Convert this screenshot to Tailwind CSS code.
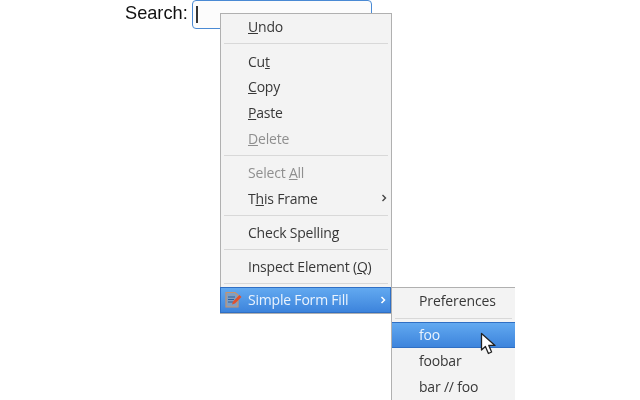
<!DOCTYPE html>
<html>
<head>
<meta charset="utf-8">
<script src="https://cdn.jsdelivr.net/npm/@tailwindcss/browser@4"></script>
</head>
<body class="bg-white overflow-hidden">
<div class="relative w-[640px] h-[400px] overflow-hidden bg-white blur-[0.35px]">
  <div class="flex items-start pl-[125px]">
    <span class="w-[66.5px] font-['Liberation_Sans',sans-serif] text-[18.2px] leading-[26px] text-[#111]">Search:</span>
    <div class="w-[180px] h-[29px] rounded-[4px] border-[1.5px] border-[#4a8ad4] bg-[#fcfcfc] flex items-center pl-[3.5px]">
      <div class="w-[1.5px] h-[17px] bg-[#333]"></div>
    </div>
  </div>

  <div class="absolute left-[220px] top-[13px] w-[172px] h-[301px] bg-[#f3f3f3] border border-[#b0b0b0] font-['Open_Sans',sans-serif] text-[14px] tracking-[-0.2px] text-[#383838] flex flex-col">
    <div class="h-[26px] flex items-center pl-[27px]"><span><u>U</u>ndo</span></div>
    <div class="h-[8px] flex items-center px-[3px]"><div class="h-px w-full bg-[#d8d8d8]"></div></div>
    <div class="h-[26px] flex items-center pl-[27px] pt-[1px]"><span>Cu<u>t</u></span></div>
    <div class="h-[26px] flex items-center pl-[27px]"><span><u>C</u>opy</span></div>
    <div class="h-[26px] flex items-center pl-[27px]"><span><u>P</u>aste</span></div>
    <div class="h-[26px] flex items-center pl-[27px] text-[#8f8f8f]"><span><u>D</u>elete</span></div>
    <div class="h-[8px] flex items-center px-[3px]"><div class="h-px w-full bg-[#d8d8d8]"></div></div>
    <div class="h-[26px] flex items-center pl-[27px] text-[#8f8f8f]"><span>Select <u>A</u>ll</span></div>
    <div class="h-[26px] flex items-center pl-[27px] justify-between pr-[4px]"><span>T<u>h</u>is Frame</span>
      <svg width="6" height="8" viewBox="0 0 6 8"><path d="M1.5 1 L4.5 4 L1.5 7" fill="none" stroke="#444" stroke-width="1.4"/></svg></div>
    <div class="h-[8px] flex items-center px-[3px]"><div class="h-px w-full bg-[#d8d8d8]"></div></div>
    <div class="h-[26px] flex items-center pl-[27px]"><span>Check Spellin<u>g</u></span></div>
    <div class="h-[8px] flex items-center px-[3px]"><div class="h-px w-full bg-[#d8d8d8]"></div></div>
    <div class="h-[26px] flex items-center pl-[27px]"><span>Inspect Element (<u>Q</u>)</span></div>
    <div class="h-[8px] flex items-center px-[3px]"><div class="h-px w-full bg-[#d8d8d8]"></div></div>
    <div class="h-[26px] flex items-center pl-[27px] pr-[4px] justify-between text-[#eaf3fd] bg-gradient-to-b from-[#62a9f0] to-[#3d84dc] border border-[#2f6fc4] -ml-px relative">
      <svg class="absolute left-[3px] top-[3px]" width="19" height="18" viewBox="0 0 19 18">
        <path d="M2 1.5 H11 L14 4 V16 H2 Z" fill="#7f9fc4" stroke="#c9936a" stroke-width="1.2"/>
        <path d="M4 6 H11 M4 8.5 H10 M4 11 H9" stroke="#2f5e9a" stroke-width="1"/>
        <path d="M8 13.5 L9 10.5 L15.5 4 L17.5 6 L11 12.5 Z" fill="#e2502c"/>
      </svg>
      <span>Simple Form Fill</span>
      <svg width="6" height="8" viewBox="0 0 6 8"><path d="M1.5 1 L4.5 4 L1.5 7" fill="none" stroke="#fff" stroke-width="1.5"/></svg>
    </div>
  </div>

  <div class="absolute left-[391px] top-[287px] w-[124px] h-[113px] bg-[#f3f3f3] border-l border-t border-[#b0b0b0] font-['Open_Sans',sans-serif] text-[14px] tracking-[-0.2px] text-[#383838] flex flex-col">
    <div class="h-[26px] flex items-center pl-[27px] pb-[1px]"><span class="tracking-[-0.1px]">Preferences</span></div>
    <div class="h-[8px] flex items-center px-[3px]"><div class="h-px w-full bg-[#d8d8d8]"></div></div>
    <div class="h-[26px] flex items-center pl-[27px] pb-[1px] text-[#eaf3fd] bg-gradient-to-b from-[#62a9f0] to-[#3d84dc] border-y border-[#2f6fc4]"><span>foo</span></div>
    <div class="h-[26px] flex items-center pl-[27px] pb-[1px]"><span>foobar</span></div>
    <div class="h-[26px] flex items-center pl-[27px] pb-[1px]"><span>bar // foo</span></div>
  </div>

  <svg class="absolute left-[480px] top-[332px]" width="18" height="24" viewBox="0 0 18 24">
    <path d="M1.5 1.5 V18 L5.4 14.4 L8.4 21.5 L11.6 20 L8.8 13.4 H15 Z" fill="#fff" stroke="#222" stroke-width="1.3" stroke-linejoin="round"/>
  </svg>
</div>
</body>
</html>
